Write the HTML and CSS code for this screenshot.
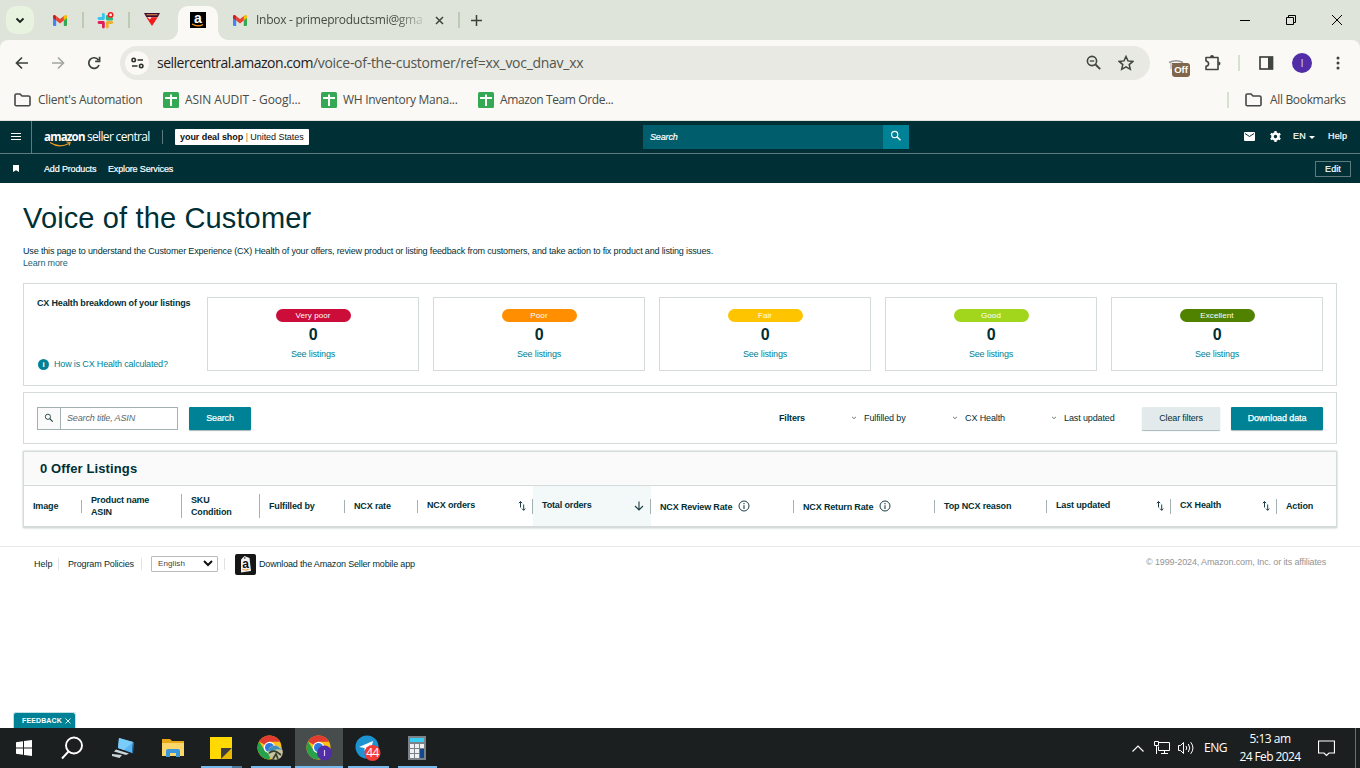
FILE: index.html
```html
<!DOCTYPE html>
<html lang="en">
<head>
<meta charset="utf-8">
<title>Voice of the Customer</title>
<link rel="stylesheet" href="styles.css">
</head>
<body>
<svg width="0" height="0" class="defs">
  <defs>
    <symbol id="gmail" viewBox="0 0 14 11">
      <path d="M0 1.5V10a1 1 0 0 0 1 1h2.200V4z" fill="#4285f4"/>
      <path d="M14 1.500V10a1 1 0 0 1-1 1h-2.200V4z" fill="#34a853"/>
      <path d="M10.800 1v4.500L14 3V1.500C14 0 12.400-.3 11.500.4z" fill="#fbbc04"/>
      <path d="M3.200 5.500V1l3.800 3 3.800-3v4.500L7 8.400z" fill="#ea4335"/>
      <path d="M0 1.500V3l3.200 2.500V1L2.500.4C1.600-.3 0 0 0 1.500z" fill="#c5221f"/>
    </symbol>
    <symbol id="sheet" viewBox="0 0 16 16">
      <rect width="16" height="16" rx="1.500" fill="#34a853"/>
      <path d="M2 6h12M8 2.500v11.500" stroke="#fff" stroke-width="2" fill="none"/>
    </symbol>
    <symbol id="folder" viewBox="0 0 17 14">
      <path d="M1 2.300Q1 1 2.300 1H6l2 2h6.500Q16 3 16 4.300v7.200q0 1.300-1.300 1.300H2.300Q1 12.800 1 11.500z" fill="none" stroke="#444746" stroke-width="1.600"/>
    </symbol>
    <symbol id="sort" viewBox="0 0 8 10">
      <path d="M2.500 6.500V.500M.8 2.200L2.500.5l1.700 1.700M5.700 3.500V9.300M4 7.600l1.700 1.700 1.700-1.700" fill="none" stroke="#1d3f45" stroke-width="1"/>
    </symbol>
    <symbol id="info" viewBox="0 0 12 12">
      <circle cx="6" cy="6" r="5" fill="none" stroke="#1d3f45" stroke-width="1"/>
      <path d="M6 5.200V9M6 3v1.200" stroke="#1d3f45" stroke-width="1.100"/>
    </symbol>
    <symbol id="mag" viewBox="0 0 12 12">
      <circle cx="4.700" cy="4.500" r="3.100" fill="none" stroke="currentColor" stroke-width="1.100"/>
      <path d="M6.900 6.800L10.500 10.300" stroke="currentColor" stroke-width="1.400"/>
    </symbol>
    <symbol id="chev" viewBox="0 0 6 4">
      <path d="M1 .8l2 1.900L5 .8" fill="none" stroke="#5c7276" stroke-width=".9"/>
    </symbol>
    <symbol id="chrome" viewBox="0 0 26 26">
      <circle cx="13" cy="13" r="12.500" fill="#fbbf16"/>
      <path d="M2.200 6.700A12.500 12.500 0 0 1 24 7H13v6z" fill="#e23b30"/>
      <path d="M2.200 6.700A12.500 12.500 0 0 0 12.500 25.500L18 16 8 16z" fill="#25a24b"/>
      <circle cx="13" cy="13" r="6" fill="#fff"/>
      <circle cx="13" cy="13" r="4.700" fill="#3077e3"/>
    </symbol>
  </defs>
</svg>

<div class="tabstrip">
  <div class="tab-search"><svg width="10" height="7" viewBox="0 0 10 7"><path d="M1.500 1.500L5 5l3.500-3.500" fill="none" stroke="#1b1f1a" stroke-width="1.800"/></svg></div>
  <svg class="fav-gmail" width="14" height="11"><use href="#gmail"/></svg>
  <i class="tab-sep sep-a"></i>
  <svg class="fav-slack" width="17" height="17" viewBox="0 0 17 17" fill="none" stroke-width="2.800" stroke-linecap="round">
    <path d="M6.400 2.500v4M2 6.500h4" stroke="#36c5f0"/><path d="M10.300 4.500v2.500M10.500 7h4.300" stroke="#2eb67d"/>
    <path d="M2 10.500h4.200M6.400 11v4" stroke="#e01e5a"/><path d="M10.500 10.500h4.300M10.300 11v4" stroke="#ecb22e"/>
    <circle cx="13.600" cy="2.900" r="2.100" fill="#fff" stroke="#f01818" stroke-width="1.500"/>
  </svg>
  <i class="tab-sep sep-b"></i>
  <svg class="fav-tri" width="16" height="14" viewBox="0 0 16 14">
    <path d="M0 0h16l-2.200 4H2.200z" fill="#3a1230"/><path d="M2.500 1.700h11" stroke="#d47b46" stroke-width="1.200"/>
    <path d="M2.300 4.300h11.400L8 13z" fill="#f21a1a"/><path d="M3.500 4.300h4L6 6.500z" fill="#fff"/>
  </svg>
  <div class="tab-active">
    <svg width="16" height="16" viewBox="0 0 16 16"><rect width="16" height="16" fill="#000"/><text x="8" y="10.800" text-anchor="middle" class="fav-a">a</text><path d="M2 12q6 3.500 11 .4" fill="none" stroke="#f79b1c" stroke-width="1.200"/></svg>
  </div>
  <svg class="fav-gmail2" width="14" height="11"><use href="#gmail"/></svg>
  <span class="tab-title">Inbox - primeproductsmi@gma</span>
  <svg class="tab-x" width="9" height="9" viewBox="0 0 9 9"><path d="M1 1l7 7M8 1L1 8" stroke="#3e443c" stroke-width="1.500"/></svg>
  <i class="tab-sep sep-c"></i>
  <svg class="tab-plus" width="11" height="11" viewBox="0 0 11 11"><path d="M5.500 0v11M0 5.500h11" stroke="#3b423a" stroke-width="1.500"/></svg>
  <svg class="win-btns" width="107" height="12" viewBox="0 0 107 12" fill="none" stroke="#000">
    <path d="M0 6.500h10"/><path d="M46.500 3.500h7v7h-7zM48.500 3.500v-2h7v7h-2"/><path d="M92 1l10 10M102 1L92 11"/>
  </svg>
</div>

<div class="chrome">
  <div class="toolbar">
    <svg class="nav-ic" width="14" height="14" viewBox="0 0 14 14" fill="none" stroke="#3b423a" stroke-width="1.700"><path d="M13 7H2M7 1.500L1.500 7 7 12.500"/></svg>
    <svg class="nav-ic" width="14" height="14" viewBox="0 0 14 14" fill="none" stroke="#a3a7a0" stroke-width="1.600"><path d="M1 7h11M7 1.500L12.500 7 7 12.500"/></svg>
    <svg class="nav-ic" width="14" height="14" viewBox="0 0 14 14" fill="none" stroke="#3b423a" stroke-width="1.700"><path d="M12 9a5.300 5.300 0 1 1-.6-5M12.600.8v4.500H8.200"/></svg>
    <div class="omnibox">
      <div class="site-info"><svg width="13" height="12" viewBox="0 0 13 12" fill="none" stroke="#2c302b" stroke-width="1.600"><circle cx="2.700" cy="3" r="1.700"/><path d="M6.500 3H12M1 9h5.500"/><circle cx="10.200" cy="9" r="1.700"/></svg></div>
      <span class="url"><b>sellercentral.amazon.com</b>/voice-of-the-customer/ref=xx_voc_dnav_xx</span>
      <svg class="zoom-ic" width="16" height="16" viewBox="0 0 16 16" fill="none" stroke="#40453f"><circle cx="6" cy="6" r="4.600" stroke-width="1.600"/><path d="M9.500 9.500l4.700 4.700" stroke-width="1.900"/><path d="M3.800 6h4.400" stroke-width="1.300"/></svg>
      <svg width="16" height="16" viewBox="0 0 16 16" fill="none" stroke="#40453f" stroke-width="1.500"><path d="M8 1.500l2 4.400 4.900.5-3.700 3.200 1.100 4.700L8 11.800l-4.300 2.500 1.100-4.700L1.100 6.400 6 5.900z"/></svg>
    </div>
    <div class="ext-off"><svg width="16" height="12" viewBox="0 0 16 12" fill="none"><path d="M1 3.500Q8 0 15 3.500" stroke="#999" stroke-width="1.600"/><path d="M4 4.700h9" stroke="#666" stroke-width="1.400"/><path d="M3 4v6" stroke="#d0d0ce" stroke-width="2"/></svg><span class="off">Off</span></div>
    <svg class="puzzle" width="18" height="18" viewBox="0 0 18 18"><path d="M2 3.500h12v12H2v-3.200q2.600-.4 2.600-2.600T2 7z" fill="none" stroke="#40453f" stroke-width="1.600" stroke-linejoin="round"/><path d="M6 3a2 2 0 0 1 4 0zM14.500 7.500a2 2 0 0 1 0 4z" fill="#40453f"/></svg>
    <i class="tool-sep"></i>
    <svg class="panel" width="15" height="14" viewBox="0 0 15 14"><rect x="1" y="1" width="12.500" height="12" fill="none" stroke="#40453f" stroke-width="1.700"/><path d="M9 1h5v12H9z" fill="#40453f"/></svg>
    <div class="avatar">I</div>
    <svg class="dots" width="4" height="14" viewBox="0 0 4 14" fill="#3b423a"><circle cx="2" cy="2" r="1.500"/><circle cx="2" cy="7" r="1.500"/><circle cx="2" cy="12" r="1.500"/></svg>
  </div>
  <div class="bookmarks">
    <svg width="17" height="14"><use href="#folder"/></svg><span class="bm-a">Client's Automation</span>
    <svg width="16" height="16"><use href="#sheet"/></svg><span class="bm-b">ASIN AUDIT - Googl...</span>
    <svg width="16" height="16"><use href="#sheet"/></svg><span class="bm-c">WH Inventory Mana...</span>
    <svg width="16" height="16"><use href="#sheet"/></svg><span class="bm-d">Amazon Team Orde...</span>
    <i class="bm-sep"></i>
    <svg width="17" height="14"><use href="#folder"/></svg><span class="bm-e">All Bookmarks</span>
  </div>
</div>

<header class="sc-head">
  <div class="sc-menu"><svg width="10" height="7" viewBox="0 0 10 7"><path d="M0 .5h10M0 3.500h10M0 6.500h10" stroke="#fff"/></svg></div>
  <div class="logo"><b>amazon</b><span>seller central</span><svg class="smile" width="24" height="6" viewBox="0 0 24 6" fill="none" stroke="#f49a1e" stroke-width="1.200"><path d="M1 1.500Q10 7.500 20 2.500M17.500 1l3.500.5-.8 3"/></svg></div>
  <i class="logo-sep"></i>
  <div class="shop"><b>your deal shop</b> <em>|</em> United States</div>
  <div class="sc-search"><span>Search</span><div class="sc-go"><svg width="12" height="12"><use href="#mag"/></svg></div></div>
  <svg class="mail" width="11" height="9" viewBox="0 0 11 9"><rect width="11" height="9" rx="1" fill="#fff"/><path d="M1 1.500l4.500 3 4.500-3" fill="none" stroke="#002f36" stroke-width="1"/></svg>
  <svg class="gear" width="11" height="11" viewBox="0 0 11 11"><circle cx="5.500" cy="5.500" r="3" fill="none" stroke="#fff" stroke-width="2.600"/><path d="M5.500 0v2M5.500 9v2M.7 2.700l1.800 1M8.500 7.300l1.800 1M.7 8.300l1.800-1M8.500 3.700l1.800-1" stroke="#fff" stroke-width="2.200"/></svg>
  <span class="lang">EN</span><i class="caret"></i><span class="help">Help</span>
</header>
<nav class="sc-nav">
  <svg width="6" height="7" viewBox="0 0 6 7"><path d="M0 0h6v7L3 5.300 0 7z" fill="#fff"/></svg>
  <span class="nv1">Add Products</span><span class="nv2">Explore Services</span>
  <span class="edit">Edit</span>
</nav>

<main class="page">
  <h1>Voice of the Customer</h1>
  <p class="intro">Use this page to understand the Customer Experience (CX) Health of your offers, review product or listing feedback from customers, and take action to fix product and listing issues.</p>
  <a class="learn">Learn more</a>

  <section class="health">
    <div class="health-side">
      <b>CX Health breakdown of your listings</b>
      <div class="how"><i>i</i><span>How is CX Health calculated?</span></div>
    </div>
    <div class="card"><span class="pill very">Very poor</span><strong>0</strong><a>See listings</a></div>
    <div class="card"><span class="pill poor">Poor</span><strong>0</strong><a>See listings</a></div>
    <div class="card"><span class="pill fair">Fair</span><strong>0</strong><a>See listings</a></div>
    <div class="card"><span class="pill good">Good</span><strong>0</strong><a>See listings</a></div>
    <div class="card"><span class="pill exc">Excellent</span><strong>0</strong><a>See listings</a></div>
  </section>

  <section class="filters">
    <div class="field"><div class="field-ic"><svg width="10" height="10"><use href="#mag"/></svg></div><span>Search title, ASIN</span></div>
    <div class="btn search-btn">Search</div>
    <b class="f-title">Filters</b>
    <div class="drop d1"><svg width="6" height="4"><use href="#chev"/></svg>Fulfilled by</div>
    <div class="drop d2"><svg width="6" height="4"><use href="#chev"/></svg>CX Health</div>
    <div class="drop d3"><svg width="6" height="4"><use href="#chev"/></svg>Last updated</div>
    <div class="btn clear-btn">Clear filters</div>
    <div class="btn dl-btn">Download data</div>
  </section>

  <section class="listings">
    <h2>0 Offer Listings</h2>
    <div class="thead">
      <div class="th">Image</div>
      <div class="th two">Product name<br>ASIN</div>
      <div class="th two">SKU<br>Condition</div>
      <div class="th">Fulfilled by</div>
      <div class="th">NCX rate</div>
      <div class="th sortable"><span>NCX orders</span><svg width="8" height="10"><use href="#sort"/></svg></div>
      <div class="th sortable on"><span>Total orders</span><svg width="10" height="10" viewBox="0 0 10 10"><path d="M5 .5V9M1 5l4 4 4-4" fill="none" stroke="#1d3f45" stroke-width="1.100"/></svg></div>
      <div class="th rate"><span>NCX Review Rate</span><svg width="12" height="12"><use href="#info"/></svg></div>
      <div class="th rate"><span>NCX Return Rate</span><svg width="12" height="12"><use href="#info"/></svg></div>
      <div class="th">Top NCX reason</div>
      <div class="th sortable"><span>Last updated</span><svg width="8" height="10"><use href="#sort"/></svg></div>
      <div class="th sortable"><span>CX Health</span><svg width="8" height="10"><use href="#sort"/></svg></div>
      <div class="th">Action</div>
    </div>
  </section>
</main>

<footer class="foot">
  <span class="ft-help">Help</span><i></i>
  <span class="ft-pol">Program Policies</span><i></i>
  <div class="select">English<svg width="10" height="7" viewBox="0 0 10 7"><path d="M1 1l4 4 4-4" fill="none" stroke="#111" stroke-width="2"/></svg></div><i></i>
  <svg class="app" width="21" height="21" viewBox="0 0 21 21"><rect width="21" height="21" rx="2" fill="#161616"/><path d="M6 5.500L9.500 2l5 2 1.500 13-10 1.500z" fill="#f1f1f1"/><circle cx="9.800" cy="4" r=".8" fill="#161616"/><text x="10.700" y="14" text-anchor="middle" class="app-a">a</text><path d="M7.500 15.500q3 1.200 6 0" stroke="#f49a1e" fill="none"/></svg>
  <span class="ft-app">Download the Amazon Seller mobile app</span>
  <span class="copy">© 1999-2024, Amazon.com, Inc. or its affiliates</span>
</footer>

<div class="feedback-row"><div class="feedback">FEEDBACK<svg width="6" height="6" viewBox="0 0 6 6"><path d="M.5.5l5 5M5.500.5l-5 5" stroke="#fff" stroke-width=".9"/></svg></div></div>

<div class="taskbar">
  <div class="tk w48"><svg width="16" height="16" viewBox="0 0 16 16" fill="#fff"><path d="M0 2.200L7 1.200v6.300H0zM8 1.100L16 0v7.500H8zM0 8.500h7v6.300L0 13.800zM8 8.500h8V16l-8-1.100z"/></svg></div>
  <div class="tk w48"><svg width="24" height="24" viewBox="0 0 24 24" fill="none" stroke="#fff" stroke-width="1.900"><circle cx="14" cy="9.500" r="8"/><path d="M8.500 15.500L2 22.500"/></svg></div>
  <div class="tk w54"><svg width="24" height="22" viewBox="0 0 24 22"><path d="M8 1l14 4-1 11L7 11z" fill="#58b5f2"/><path d="M8 1l14 4-9 8-6-2z" fill="#7cccfa"/><path d="M22 5l1 .5-1 11-1-.5z" fill="#2478b8"/><path d="M5 12.500l13 4-3 1.500L3 14.500zM1 17l10 1-2.500 3L1 19z" fill="#ccd5da"/></svg></div>
  <div class="tk w46"><svg width="22" height="20" viewBox="0 0 22 20"><path d="M0 1h8l2 2h12v15H0z" fill="#e8a917"/><path d="M0 5h22v13H0z" fill="#fbd668"/><path d="M4 19v-6q0-2 2-2h10q2 0 2 2v6h-4v-4H8v4z" fill="#3a97dd"/></svg></div>
  <div class="tk w50 run sticky"><svg width="22" height="22" viewBox="0 0 22 22"><path d="M0 0h22v11L11 22H0z" fill="#ffd900"/><path d="M11 11h11L11 22z" fill="#3c3c3c"/><path d="M22 11v11H11z" fill="#e9b800"/></svg></div>
  <div class="tk w49 run"><svg width="27" height="26" viewBox="0 0 27 26"><use href="#chrome" width="25" height="25"/><circle cx="18.500" cy="17.500" r="7.300" fill="#c9c2a0"/><path d="M11 16q3-6 9-5l5 4q-6-2-9 1z" fill="#3d8fb8"/><path d="M12 18q4-3 8-1l4 3M16 24l3-5 2 5" stroke="#34402a" stroke-width="1.700" fill="none"/></svg></div>
  <div class="tk w48 run active"><svg width="27" height="26" viewBox="0 0 27 26"><use href="#chrome" width="25" height="25"/><circle cx="18.500" cy="18" r="7.500" fill="#512da8"/><path d="M18.500 15v6" stroke="#d6caef" stroke-width="1.200"/></svg></div>
  <div class="tk w50 run"><svg width="27" height="27" viewBox="0 0 27 27"><circle cx="12" cy="12" r="11.500" fill="#1d93d2"/><path d="M4 12L18 6l-2.500 11-4-3-2 2v-3z" fill="#fff"/><circle cx="17.500" cy="18" r="8" fill="#f43b34"/><text x="17.500" y="22.200" text-anchor="middle" class="badge-n">44</text></svg></div>
  <div class="tk w48 run"><svg width="18" height="24" viewBox="0 0 18 24"><rect width="18" height="24" fill="#7b8289"/><path d="M2 2h14v4H2z" fill="#39cdf2"/><path d="M2 8h4v4H2zM7 8h4v4H7zM12 8h4v4h-4zM2 13h4v4H2zM7 13h4v4H7zM2 18h4v4H2zM7 18h4v4H7z" fill="#eef0f1"/><path d="M12 13h4v9h-4z" fill="#124a8b"/></svg></div>
  <svg class="tray-up" width="12" height="7" viewBox="0 0 12 7"><path d="M.5 6.500L6 1l5.500 5.500" fill="none" stroke="#fff" stroke-width="1.200"/></svg>
  <svg class="tray-net" width="17" height="14" viewBox="0 0 17 14" fill="none" stroke="#fff"><path d="M4.500 1.500h11v8h-11v-4M10.500 9.500v3M7 12.500h7M.5.500h4v4h-4zM2.500 4.500v8.500"/></svg>
  <svg class="tray-vol" width="17" height="14" viewBox="0 0 17 14" fill="none" stroke="#fff"><path d="M.5 4.500h2l3-3v11l-3-3h-2zM8 5q1.500 2 0 4M10.300 3q3 4 0 8M12.700 1.200q4.500 5.800 0 11.600"/></svg>
  <span class="eng">ENG</span>
  <div class="clock"><span>5:13 am</span><span class="date">24 Feb 2024</span></div>
  <svg class="note" width="17" height="17" viewBox="0 0 17 17"><path d="M.5 1h16v12h-5.500L8.500 15.500 6 13H.500z" fill="none" stroke="#fff" stroke-width="1.200"/></svg>
  <i class="desk"></i>
</div>
</body>
</html>
```
FILE: styles.css
```css
* { box-sizing: border-box; }
body {
  margin: 0; width: 1360px; height: 768px; overflow: hidden; background: #fff;
  display: flex; flex-direction: column; color: #002f36;
  font: 9px/12px "Liberation Sans", Arial, sans-serif; letter-spacing: -.15px; white-space: nowrap;
}
svg { display: block; flex: none; }
i { font-style: normal; flex: none; }
.defs { position: absolute; }

/* Browser tab strip */
.tabstrip { flex: none; height: 40px; background: #dee4d9; display: flex; align-items: center; font-family: "Open Sans", sans-serif; }
.tab-search { width: 28px; height: 28px; margin-left: 6px; border-radius: 10px; background: #e7f3df; display: flex; align-items: center; justify-content: center; }
.fav-gmail { margin-left: 19px; }
.tab-sep { width: 2px; height: 16px; background: #bccbb4; }
.sep-a { margin-left: 15px; }
.fav-slack { margin-left: 13px; }
.sep-b { margin-left: 14px; }
.fav-tri { margin-left: 14px; }
.tab-active {
  width: 40px; height: 34px; margin: 6px 0 0 18px; background: #fbf9f5; border-radius: 10px 10px 0 0;
  display: flex; justify-content: center; padding-top: 6px; position: relative;
}
.tab-active::before, .tab-active::after { content: ""; position: absolute; bottom: 0; width: 10px; height: 10px; }
.tab-active::before { left: -10px; background: radial-gradient(circle at 0 0, transparent 9.500px, #fbf9f5 10px); }
.tab-active::after { right: -10px; background: radial-gradient(circle at 100% 0, transparent 9.500px, #fbf9f5 10px); }
.tab-active svg { overflow: visible; }
.fav-a { font: 700 14px "Liberation Sans", sans-serif; fill: #fff; letter-spacing: 0; }
.fav-gmail2 { margin-left: 15px; }
.tab-title {
  width: 169px; margin-left: 9px; overflow: hidden; font-size: 12px; line-height: 18px; letter-spacing: -.28px; color: #454a43;
  -webkit-mask-image: linear-gradient(90deg, #000 138px, rgba(0,0,0,.2) 166px);
}
.tab-x { margin-left: 10px; }
.sep-c { margin-left: 14px; }
.tab-plus { margin-left: 11px; }
.win-btns { margin-left: auto; margin-right: 13px; }

/* Toolbar and bookmarks */
.chrome { flex: none; background: linear-gradient(#dee4d9 12px, #fbf9f5 12px); font-family: "Open Sans", sans-serif; height: 81px; border-bottom: 1px solid #dfe2d9; }
.toolbar { height: 46px; background: #fbf9f5; border-radius: 8px 8px 0 0; display: flex; align-items: center; }
.nav-ic { margin-left: 15px; }
.nav-ic + .nav-ic { margin-left: 22px; }
.omnibox { width: 1030px; height: 34px; margin-left: 19px; border-radius: 17px; background: #e9e9e3; display: flex; align-items: center; padding-left: 5px; }
.site-info { width: 24px; height: 24px; border-radius: 50%; background: #fbf9f5; display: flex; align-items: center; justify-content: center; }
.url { margin-left: 8px; width: 900px; font-size: 14px; line-height: 20px; letter-spacing: -.28px; color: #52564f; }
.url b { font-weight: 400; letter-spacing: -.5px; color: #1d201c; }
.zoom-ic { margin-left: 29px; margin-right: 16px; }
.ext-off { position: relative; width: 22px; height: 22px; margin-left: 18px; padding-top: 7px; }
.off { position: absolute; left: 4px; top: 11px; width: 18px; height: 14px; border-radius: 3px; background: #80674c; color: #fff; font: 700 9.500px/14px "Liberation Sans", sans-serif; letter-spacing: 0; text-align: center; }
.puzzle { margin-left: 14px; }
.tool-sep { width: 2px; height: 16px; margin-left: 16px; background: #d5e2ce; }
.panel { margin-left: 19px; }
.avatar { width: 20px; height: 20px; margin-left: 18px; border-radius: 50%; background: #512da8; color: #d9cff0; font-size: 11px; line-height: 20px; text-align: center; }
.dots { margin-left: 24px; }
.bookmarks { height: 34px; padding: 0 14px 6px 14px; display: flex; align-items: center; font-size: 12px; line-height: 18px; color: #474b45; }
.bookmarks span { flex: none; padding-bottom: 0; }
.bm-a { width: 125px; margin-left: 7px; letter-spacing: -.28px; }
.bm-b { width: 136px; margin-left: 6px; letter-spacing: -.06px; }
.bm-c { width: 135px; margin-left: 6px; letter-spacing: -.29px; }
.bm-d { width: 114px; margin-left: 6px; letter-spacing: -.39px; }
.bm-e { margin-left: 8px; width: 76px; letter-spacing: -.33px; }
.bm-sep { width: 2px; height: 16px; margin-left: auto; margin-right: 16px; background: #d5e2ce; }

/* Seller Central header */
.sc-head { flex: none; height: 33px; background: #002f36; border-bottom: 1px solid #5f7a7d; display: flex; align-items: center; color: #fff; }
.sc-menu { width: 32px; height: 32px; border-right: 1px solid #5f7a7d; padding: 12px 0 0 11px; }
.logo { position: relative; width: 107px; margin-left: 12px; display: flex; font: 12px/16px "Open Sans", sans-serif; }
.logo b { width: 43px; font-size: 11.500px; letter-spacing: -.8px; }
.logo span { letter-spacing: -.67px; }
.smile { position: absolute; left: 5px; top: 12px; }
.logo-sep { width: 1px; height: 14px; margin-left: 11px; background: #5f7a7d; }
.shop { height: 16px; width: 134px; margin-left: 12px; padding-left: 5px; background: #fff; border-radius: 1px; color: #111; line-height: 16px; letter-spacing: -.06px; }
.shop em { font-style: normal; color: #b5702d; }
.sc-search { width: 266px; height: 24px; margin-left: 334px; margin-top: -1px; background: #005d6b; display: flex; justify-content: space-between; line-height: 24px; padding-left: 7px; font-style: italic; -webkit-text-stroke: .2px #fff; }
.sc-go { width: 26px; background: #008296; padding: 5px 0 0 7px; }
.mail { margin-left: 335px; margin-top: -1px; }
.gear { margin-left: 15px; margin-top: -1px; }
.lang { margin-left: 12px; letter-spacing: .3px; margin-top: -2px; -webkit-text-stroke: .2px #fff; }
.caret { margin-left: 3px; border: 3px solid transparent; border-top-color: #fff; border-bottom: 0; }
.help { margin-left: 13px; letter-spacing: .1px; margin-top: -2px; -webkit-text-stroke: .2px #fff; }
.sc-nav { flex: none; height: 29px; background: #002f36; display: flex; align-items: center; padding-left: 13px; color: #fff; -webkit-text-stroke: .2px #fff; }
.nv1 { margin-left: 25px; width: 64px; }
.edit { width: 36px; height: 16px; margin-left: auto; margin-right: 9px; margin-top: 1px; border: 1px solid #5f7a7d; line-height: 14px; text-align: center; letter-spacing: .1px; }

/* Page body */
.page { flex: none; width: 1314px; margin-left: 23px; }
h1 { margin: 17px 0 0; font-size: 29px; line-height: 36px; font-weight: 400; letter-spacing: .14px; }
.intro { margin: 9px 0 0; letter-spacing: -.153px; }
a { color: #007f93; }
.learn { display: block; color: #1b6575; }
.health { height: 103px; margin-top: 14px; border: 1px solid #d5dbdb; display: flex; padding: 13px; }
.health-side { width: 170px; height: 73px; flex: none; display: flex; flex-direction: column; justify-content: space-between; letter-spacing: -.17px; }
.how { display: flex; align-items: center; color: #007f93; }
.how i { width: 11px; height: 11px; margin: 0 5px 0 1px; border-radius: 50%; background: #008296; color: #fff; font-weight: 700; font-size: 8px; line-height: 11px; text-align: center; }
.card { width: 212px; height: 74px; margin-right: 14px; border: 1px solid #d5dbdb; display: flex; flex-direction: column; align-items: center; padding-top: 11px; flex: none; }
.card:last-child { margin-right: 0; }
.pill { width: 75px; height: 13px; border-radius: 7px; color: #fff; font-size: 8px; line-height: 13px; text-align: center; letter-spacing: .1px; }
.very { background: #cc0c39; } .poor { background: #ff8f00; } .fair { background: #ffc400; } .good { background: #a2d61c; } .exc { background: #508200; }
.card strong { font-size: 16px; line-height: 18px; margin-top: 4px; }
.card a { margin-top: 4px; }
.filters { height: 52px; margin-top: 6px; border: 1px solid #d5dbdb; display: flex; align-items: center; padding: 0 13px; }
.field { width: 141px; height: 23px; border: 1px solid #a2b0b2; display: flex; align-items: center; font-style: italic; color: #59686b; }
.field-ic { width: 23px; height: 21px; background: #fafafa; border-right: 1px solid #a2b0b2; padding: 5px 0 0 6px; margin-right: 6px; color: #1d3f45; }
.btn { height: 23px; border-radius: 1px; line-height: 22px; text-align: center; background: #008296; color: #fff; box-shadow: 0 1px 1px #a9b5b6; }
.search-btn { width: 62px; margin-left: 11px; -webkit-text-stroke: .2px #fff; }
.f-title { width: 72px; margin-left: 528px; }
.drop { display: flex; align-items: center; letter-spacing: -.12px; }
.drop svg { margin-right: 7px; }
.d1 { width: 101px; } .d2 { width: 99px; } .d3 { width: 91px; }
.clear-btn { width: 78px; background: #e3eaec; color: #002f36; }
.dl-btn { width: 92px; margin-left: auto; letter-spacing: -.1px; -webkit-text-stroke: .25px #fff; }
.listings { height: 77px; margin-top: 7px; border: 1px solid #d5dbdb; border-bottom-width: 2px; box-shadow: 0 0 2px #bcc5c6; }
h2 { margin: 0; height: 34px; padding-left: 16px; background: #fafafa; border-bottom: 1px solid #d5dbdb; font-size: 13px; line-height: 34px; letter-spacing: .12px; }
.thead { display: grid; grid-template-columns: 58px 100px 78px 85px 73px 115px 118px 143px 141px 112px 124px 106px 59px; height: 40px; font-weight: 700; }
.th { display: flex; align-items: center; padding-left: 9px; position: relative; }
.th::after { content: ""; position: absolute; right: 0; top: 14px; width: 1px; height: 13px; background: #a2b0b2; }
.th:last-child::after { display: none; }
.th.two::after { top: 8px; height: 24px; }
.th.sortable::after { top: 13px; height: 15px; }
.sortable { justify-content: space-between; padding-right: 7px; }
.sortable span { margin-top: -2px; }
.on { background: #f3f8f9; }
.rate span { margin-right: 6px; padding-top: 2px; }

/* Footer */
.foot { flex: none; height: 36px; margin-top: 18px; border-top: 1px solid #e7e9e9; display: flex; align-items: center; padding: 0 0 2px 34px; }
.foot > i { width: 1px; height: 12px; background: #dfe3e3; }
.ft-help { width: 24px; letter-spacing: 0; }
.ft-pol { width: 73px; margin-left: 9px; letter-spacing: -.13px; }
.select { width: 67px; height: 16px; margin: 0 6px 0 9px; border: 1px solid #bbb; border-radius: 1px; padding: 0 4px 0 6px; display: flex; align-items: center; justify-content: space-between; font-size: 8px; letter-spacing: .1px; color: #444; }
.app { margin: 2px 3px 0 10px; }
.app-a { font: 700 12px "Liberation Sans", sans-serif; fill: #111; letter-spacing: 0; }
.ft-app { letter-spacing: -.17px; }
.copy { margin: 0 34px 4px auto; color: #949494; letter-spacing: -.13px; }

.feedback-row { margin-top: auto; padding-left: 13px; display: flex; }
.feedback { width: 63px; height: 16px; background: #008296; border: 1px solid #bfe0e4; border-bottom: 0; border-radius: 3px 3px 0 0; color: #fff; font-size: 7px; font-weight: 700; line-height: 15px; letter-spacing: .12px; display: flex; align-items: center; padding-left: 8px; }
.feedback svg { margin-left: 3px; }

/* Taskbar */
.taskbar { flex: none; height: 40px; background: #1b1f20; display: flex; align-items: center; font-family: "Open Sans", sans-serif; font-size: 12px; color: #fff; }
.tk { height: 40px; display: flex; align-items: center; justify-content: center; position: relative; flex: none; }
.w46 { width: 46px; } .w48 { width: 48px; } .w49 { width: 49px; } .w50 { width: 50px; } .w54 { width: 54px; }
.run::after { content: ""; position: absolute; left: 5px; right: 4px; bottom: 0; height: 2px; background: #76b9ed; }
.sticky::after { background: linear-gradient(90deg, #76b9ed 31px, #4f7896 31px); }
.active { background: #474c4d; }
.active::after { left: 0; right: 0; }
.badge-n { font: 12px "Open Sans", sans-serif; fill: #fff; letter-spacing: -.5px; }
.tray-up { margin-left: auto; }
.tray-net { margin-left: 10px; }
.tray-vol { margin-left: 7px; }
.eng { margin-left: 9px; width: 24px; letter-spacing: -.48px; }
.clock { width: 62px; margin-left: 11px; display: flex; flex-direction: column; align-items: center; line-height: 18px; letter-spacing: -.5px; }
.date { letter-spacing: -.6px; }
.note { margin-left: 17px; }
.desk { width: 1px; height: 40px; margin: 0 4px 0 20px; background: #6d7071; }
```
